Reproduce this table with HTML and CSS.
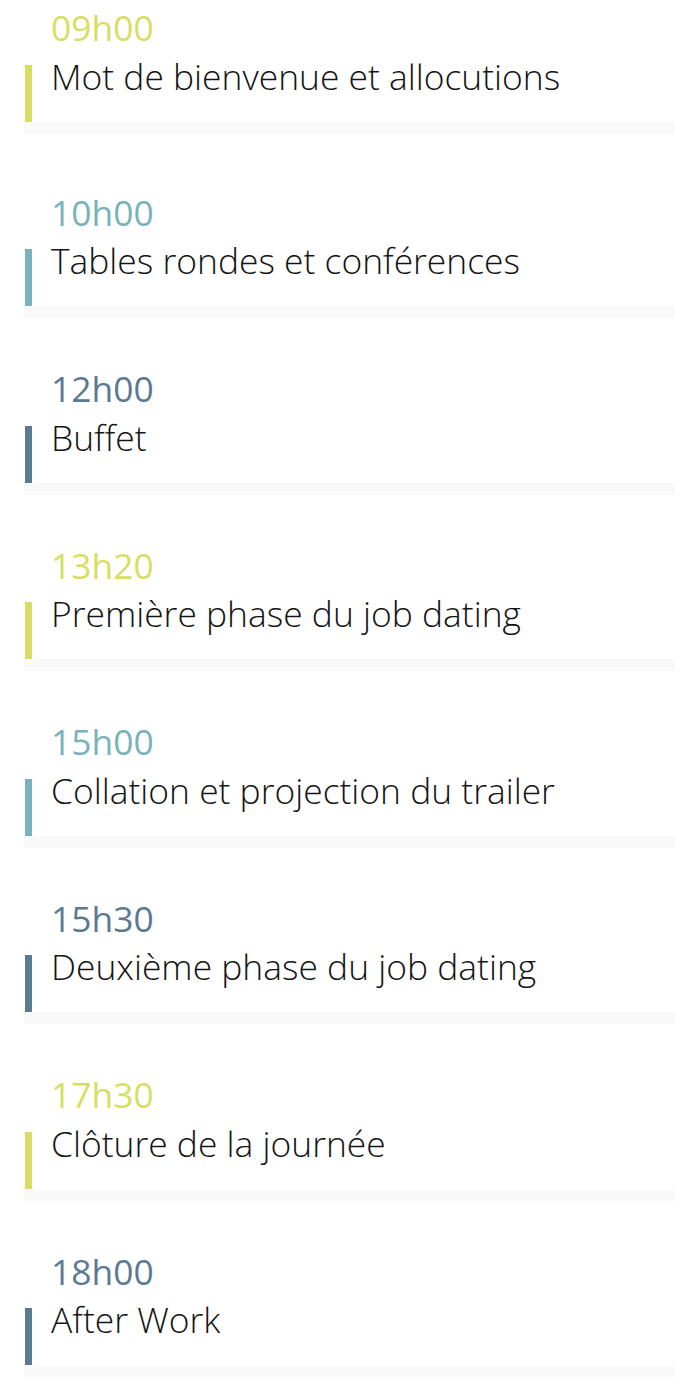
FILE: index.html
```html
<!DOCTYPE html>
<html lang="fr">
<head>
<meta charset="utf-8">
<title>Programme</title>
<link rel="stylesheet" href="styles.css">
</head>
<body>
<ul class="schedule">
  <li class="item item--first lime">
    <div class="time">09h00</div>
    <div class="event"><span class="title">Mot de bienvenue et allocutions</span></div>
    <div class="sep"></div>
  </li>
  <li class="item item--second teal">
    <div class="time">10h00</div>
    <div class="event"><span class="title">Tables rondes et conférences</span></div>
    <div class="sep"></div>
  </li>
  <li class="item slate">
    <div class="time">12h00</div>
    <div class="event"><span class="title">Buffet</span></div>
    <div class="sep"></div>
  </li>
  <li class="item lime">
    <div class="time">13h20</div>
    <div class="event"><span class="title">Première phase du job dating</span></div>
    <div class="sep"></div>
  </li>
  <li class="item teal">
    <div class="time">15h00</div>
    <div class="event"><span class="title">Collation et projection du trailer</span></div>
    <div class="sep"></div>
  </li>
  <li class="item slate">
    <div class="time">15h30</div>
    <div class="event"><span class="title">Deuxième phase du job dating</span></div>
    <div class="sep"></div>
  </li>
  <li class="item lime">
    <div class="time">17h30</div>
    <div class="event"><span class="title">Clôture de la journée</span></div>
    <div class="sep"></div>
  </li>
  <li class="item slate">
    <div class="time">18h00</div>
    <div class="event"><span class="title">After Work</span></div>
    <div class="sep"></div>
  </li>
</ul>
</body>
</html>
```
FILE: styles.css
```css
html, body {
  margin: 0;
  padding: 0;
  background: #ffffff;
}

body {
  font-family: "Open Sans", "Noto Sans", sans-serif;
}

.schedule {
  list-style: none;
  margin: 0 25px 0 24px;
  padding: 0;
}

.item {
  padding-top: 50px;
}

.item--first {
  padding-top: 7px;
}

.item--second {
  padding-top: 58px;
}

.time {
  font-size: 35.4px;
  font-weight: 400;
  line-height: 40px;
  padding-left: 27px;
  margin-bottom: 17.5px;
}

.event {
  margin-left: 1px;
  border-left: 7px solid currentColor;
  padding: 0 0 34.5px 19px;
}

.title {
  display: block;
  color: #141414;
  font-size: 35.4px;
  font-weight: 300;
  line-height: 22.5px;
  white-space: nowrap;
}

.sep {
  height: 12px;
  background: #f9f9f9;
}

.lime { color: #d8de64; }
.teal { color: #78b3b9; }
.slate { color: #5b7a92; }
```
